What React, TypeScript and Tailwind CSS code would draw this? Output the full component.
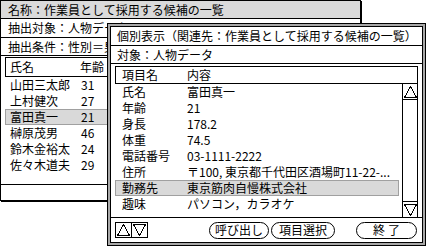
import React from "react";

type BackRow = { name: string; age: string };

const backRows: BackRow[] = [
  { name: "山田三太郎", age: "31" },
  { name: "上村健次", age: "27" },
  { name: "富田真一", age: "21" },
  { name: "榊原茂男", age: "46" },
  { name: "鈴木金裕太", age: "24" },
  { name: "佐々木道夫", age: "29" },
];

const detailRows: [string, string][] = [
  ["氏名", "富田真一"],
  ["年齢", "21"],
  ["身長", "178.2"],
  ["体重", "74.5"],
  ["電話番号", "03-1111-2222"],
  ["住所", "〒100, 東京都千代田区酒場町11-22-..."],
  ["勤務先", "東京筋肉自慢株式会社"],
  ["趣味", "パソコン，カラオケ"],
];

function Triangle({ up }: { up: boolean }) {
  return (
    <svg width="13" height="12" viewBox="0 0 13 12" shapeRendering="crispEdges">
      <polygon
        points={up ? "6.5,0.5 12.5,11.5 0.5,11.5" : "0.5,0.5 12.5,0.5 6.5,11.5"}
        fill="none"
        stroke="#000"
        strokeWidth="1"
      />
    </svg>
  );
}

function BackWindow() {
  return (
    <div className="absolute left-0 top-0 flex h-[201px] w-[361px] flex-col border border-black bg-white shadow-[1px_1px_0_#000]">
      <div className="flex h-[18px] shrink-0 items-center border-b border-black bg-[#dadada] pl-[7px]">
        名称：作業員として採用する候補の一覧
      </div>
      <div className="flex h-[19px] shrink-0 items-center border-b border-black pl-[7px]">
        抽出対象：人物データ
      </div>
      <div className="flex h-[18px] shrink-0 items-center border-b border-black pl-[7px]">
        抽出条件：性別＝男性
      </div>
      <div className="mx-[4px] mt-[1px] flex h-[20px] shrink-0 items-center border border-black pl-[4px]">
        <span className="w-[70px]">氏名</span>
        <span>年齢</span>
      </div>
      <div className="mx-[4px] flex flex-1 flex-col">
        {backRows.map((row, i) => (
          <div
            key={row.name}
            className={
              i === 2
                ? "flex h-[16px] items-center border border-[#a0a0a0] bg-[#d9d9d9] pl-[4px]"
                : "flex h-[16px] items-center border border-transparent pl-[4px]"
            }
          >
            <span className="w-[70px]">{row.name}</span>
            <span className="pl-px">{row.age}</span>
          </div>
        ))}
      </div>
      <div className="h-[16px] shrink-0 border-t border-black" />
    </div>
  );
}

function FrontWindow() {
  return (
    <div className="absolute left-[107px] top-[23px] h-[223px] w-[319px] border border-black bg-[#a8a8a8] p-[2px]">
      <div className="flex h-full flex-col border border-black bg-white">
        <div className="flex h-[19px] shrink-0 items-center border-b border-black pl-[6px]">
          個別表示（関連先：作業員として採用する候補の一覧）
        </div>
        <div className="flex h-[18px] shrink-0 items-center border-b border-black pl-[6px]">
          対象：人物データ
        </div>
        <div className="mx-[4px] mt-[2px] flex h-[18px] shrink-0 items-center border border-black pl-[6px]">
          <span className="w-[65px]">項目名</span>
          <span>内容</span>
        </div>
        <div className="mx-[4px] flex h-[133px] shrink-0">
          <div className="mr-[3px] flex flex-1 flex-col">
            {detailRows.map(([label, value], i) => (
              <div
                key={label}
                className={
                  i === 6
                    ? "flex h-[16px] items-center whitespace-nowrap border border-[#a0a0a0] bg-[#d9d9d9] pl-[6px]"
                    : "flex h-[16px] items-center whitespace-nowrap border border-transparent pl-[6px]"
                }
              >
                <span className="w-[65px] shrink-0">{label}</span>
                <span>{value}</span>
              </div>
            ))}
          </div>
          <div className="flex w-[16px] flex-col border-x border-black">
            <div className="flex h-[16px] items-center justify-center border-b border-black">
              <Triangle up />
            </div>
            <div className="flex-1" />
            <div className="flex h-[16px] items-center justify-center border-t border-black">
              <Triangle up={false} />
            </div>
          </div>
        </div>
        <div className="flex h-[25px] shrink-0 items-center border-t border-black px-[4px] pr-[5px]">
          <div className="flex">
            <div className="flex h-[16px] w-[17px] items-center justify-center border border-black">
              <Triangle up />
            </div>
            <div className="-ml-px flex h-[16px] w-[17px] items-center justify-center border border-black">
              <Triangle up={false} />
            </div>
          </div>
          <button className="ml-auto flex h-[17px] w-[60px] items-center justify-center rounded-full border border-black bg-white">
            呼び出し
          </button>
          <button className="ml-[2px] flex h-[17px] w-[64px] items-center justify-center rounded-full border border-black bg-white">
            項目選択
          </button>
          <button className="ml-[21px] flex h-[17px] w-[61px] items-center justify-center rounded-full border border-black bg-white pl-[3px] tracking-[3px]">
            終了
          </button>
        </div>
      </div>
    </div>
  );
}

export default function App() {
  return (
    <div className="relative h-[246px] w-[426px] overflow-hidden bg-white font-['Noto_Sans_CJK_JP',sans-serif] text-[12px] leading-[14px] text-black">
      <BackWindow />
      <FrontWindow />
    </div>
  );
}
